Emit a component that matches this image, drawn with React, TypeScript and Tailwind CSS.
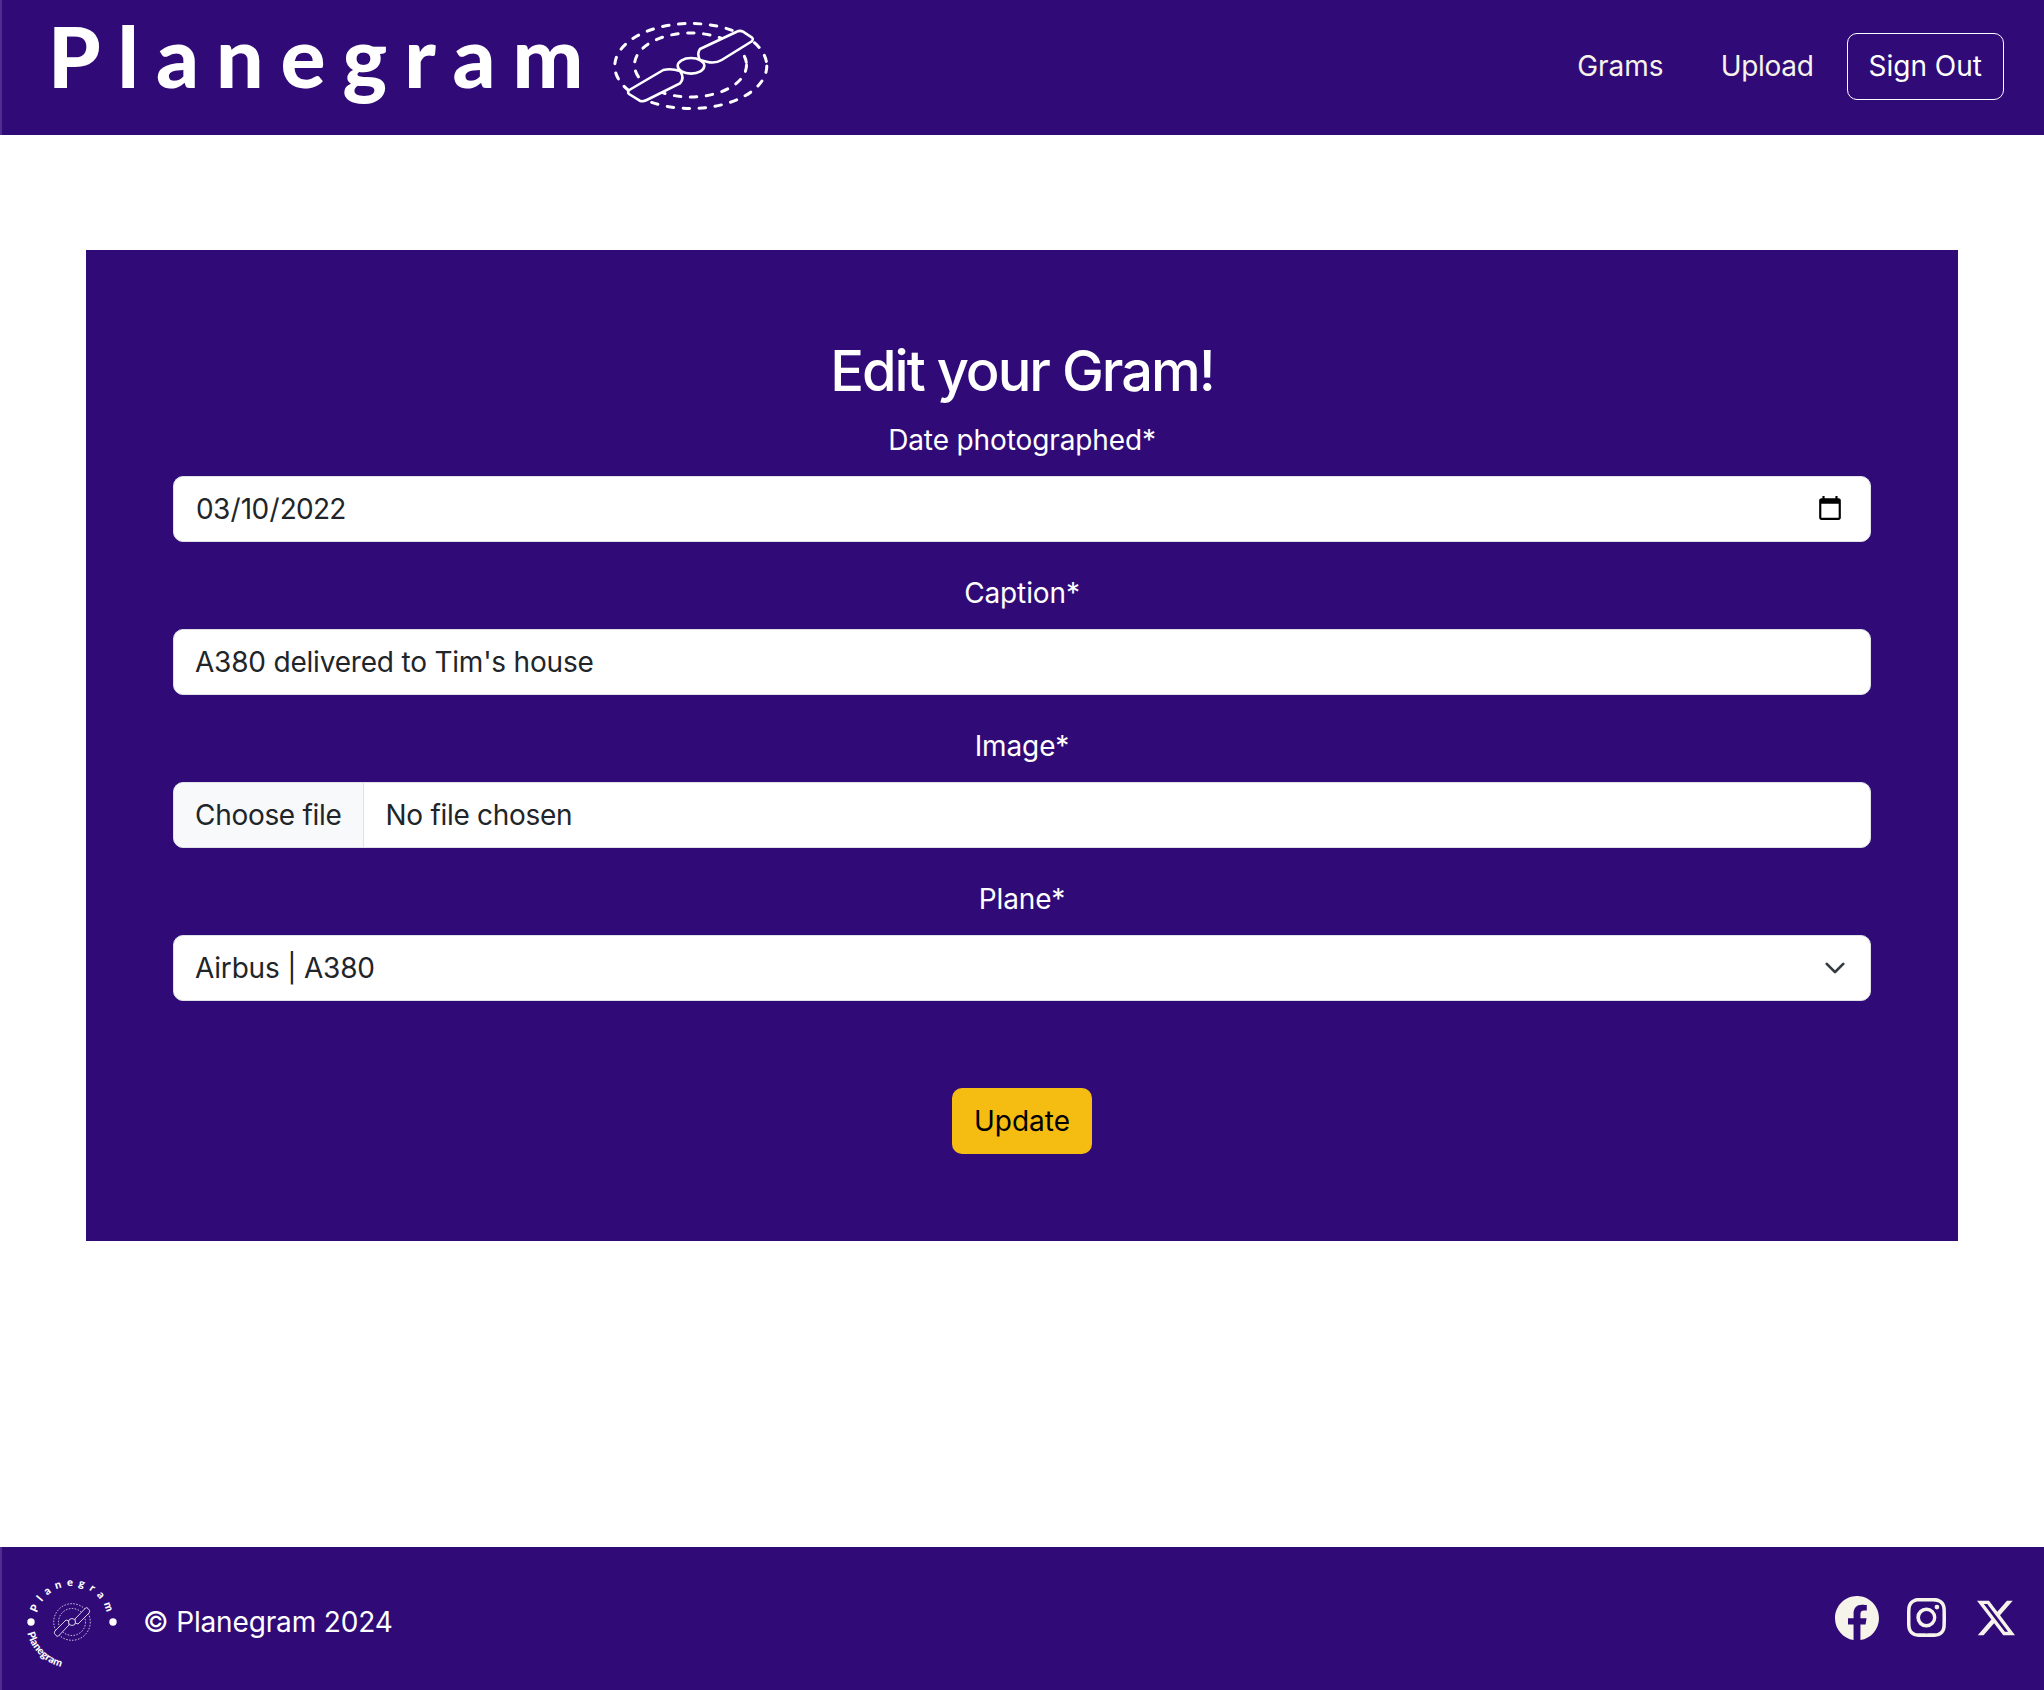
import React from 'react';
import { BsFacebook, BsInstagram, BsTwitterX } from 'react-icons/bs';

const inter = { fontFamily: 'Inter, "Liberation Sans", sans-serif' };

const PlaneIcon: React.FC = () => (
    <svg viewBox="0 0 157 91" className="w-[157px] h-[91px] shrink-0 -mt-[4px]" fill="none" stroke="white">
        <ellipse cx="77.800" cy="46" rx="76" ry="42.500" strokeWidth="3" strokeDasharray="6.500 9.500" strokeLinecap="round" />
        <ellipse cx="77.500" cy="45" rx="56" ry="32" strokeWidth="3" strokeDasharray="6.500 9.500" strokeLinecap="round" />
        <path
            d="M87 40 Q83.500 34 87 29 L123.700 11.700 Q127 10 130 11.700 L138.700 17.300 Q141 19 138.500 21.500 L108.700 40 Q102 44 93.700 41.700 Z"
            fill="#300b78"
            strokeWidth="2.600"
            strokeLinejoin="round"
        />
        <path
            d="M67 51 Q58 48 50.300 50 L16.300 70 Q14 72 16 74 L26.700 80.700 Q30 82 33.700 80 L67 63.300 Q72 58 67 51 Z"
            fill="#300b78"
            strokeWidth="2.600"
            strokeLinejoin="round"
        />
        <ellipse cx="78" cy="45.800" rx="13.300" ry="7.800" fill="#300b78" strokeWidth="2.600" />
    </svg>
);

const FooterLogo: React.FC = () => (
    <svg viewBox="0 0 96 96" className="w-[96px] h-[96px] shrink-0 overflow-visible" fill="white">
        <defs>
            <path id="arcTop" d="M12 48 A36 36 0 0 1 84 48" />
            <path id="arcBottom" d="M2 48 A46 46 0 0 0 94 48" />
        </defs>
        <text style={{ fontFamily: 'Lato, sans-serif', fontWeight: 900, fontSize: 11, letterSpacing: 5.2 }}>
            <textPath href="#arcTop" startOffset="9">Planegram</textPath>
        </text>
        <text style={{ fontFamily: 'Lato, sans-serif', fontWeight: 900, fontSize: 10.5 }}>
            <textPath href="#arcBottom" startOffset="11">Planegram</textPath>
        </text>
        <circle cx="7" cy="48" r="3.700" />
        <circle cx="89" cy="48" r="3.700" />
        <g fill="none" stroke="white" strokeWidth="0.800">
            <circle cx="48" cy="48" r="18.300" strokeDasharray="1.500 1.500" />
            <circle cx="48" cy="48" r="13.500" strokeDasharray="1.500 1.500" />
            <path d="M51 45 L61.500 34 Q63 33 64 34.500 L65.500 36.500 Q66 38 65 39 L54 50 L51 49 Z" fill="#300b78" />
            <path d="M45 51 L34.500 62 Q33 63 32 61.500 L30.500 59.500 Q30 58 31 57 L42 46 L45 47 Z" fill="#300b78" />
            <circle cx="48" cy="48" r="3.500" fill="#300b78" />
        </g>
    </svg>
);

const fieldClass =
    'block w-full h-[66px] rounded-[10px] border border-[#dee2e6] bg-white px-[21px] text-[28px] leading-[42px] tracking-[-0.2px] text-[#212529] outline-none';

const Field: React.FC<{ label: string; children: React.ReactNode }> = ({ label, children }) => (
    <div>
        <label className="block text-center text-[28px] leading-[42px] tracking-[-0.12px] text-white mb-[15px]">{label}</label>
        {children}
    </div>
);

export default function App() {
    return (
        <div className="min-h-screen flex flex-col bg-white" style={inter}>
            {/* Navbar */}
            <nav className="h-[135px] bg-[#300b78] border-l-2 border-[#4e2f90] flex items-center justify-between pl-[46px] pr-[40px]">
                <div className="flex items-center gap-[13px]">
                    <span
                        className="text-[84px] leading-none font-black tracking-[17px] text-white -mt-[24px]"
                        style={{ fontFamily: 'Lato, sans-serif' }}
                    >
                        Planegram
                    </span>
                    <PlaneIcon />
                </div>
                <div className="flex items-center text-[28px] leading-[42px]">
                    <a className="text-[#f6f3ea] mr-[57px] -mt-[4px]">Grams</a>
                    <a className="text-[#f6f3ea] tracking-[-0.3px] mr-[33px] -mt-[4px]">Upload</a>
                    <button className="h-[67px] px-[21px] rounded-[10px] border border-white text-white -mt-[3px]">Sign Out</button>
                </div>
            </nav>

            {/* Edit form */}
            <main className="flex-1 px-[86px] pt-[115px]">
                <section className="bg-[#300b78] h-[991px] px-[87px] pt-[84px]">
                    <h1 className="text-center text-[56px] leading-[74px] font-[550] tracking-[-2px] text-white mb-[11px]">
                        Edit your Gram!
                    </h1>
                    <div className="flex flex-col gap-[30px]">
                        <Field label="Date photographed*">
                            <input
                                type="date"
                                defaultValue="2022-03-10"
                                className={`${fieldClass} tracking-[-0.75px] [&::-webkit-calendar-picker-indicator]:mr-[3px]`}
                            />
                        </Field>
                        <Field label="Caption*">
                            <input type="text" defaultValue="A380 delivered to Tim's house" className={fieldClass} />
                        </Field>
                        <Field label="Image*">
                            <div className="flex h-[66px] rounded-[10px] border border-[#dee2e6] bg-white overflow-hidden text-[28px] leading-[42px] tracking-[-0.3px] text-[#212529]">
                                <span className="flex items-center px-[21px] bg-[#f8f9fa] border-r border-[#dee2e6]">Choose file</span>
                                <span className="flex items-center px-[22px]">No file chosen</span>
                            </div>
                        </Field>
                        <Field label="Plane*">
                            <div className="relative">
                                <select defaultValue="a380" className={`${fieldClass} appearance-none`}>
                                    <option value="a380">Airbus | A380</option>
                                </select>
                                <svg
                                    viewBox="0 0 16 16"
                                    className="absolute right-[25px] top-[22px] w-[22px] h-[22px] pointer-events-none"
                                    fill="none"
                                    stroke="#343a40"
                                    strokeWidth="2"
                                    strokeLinecap="round"
                                    strokeLinejoin="round"
                                >
                                    <path d="m2 5 6 6 6-6" />
                                </svg>
                            </div>
                        </Field>
                    </div>
                    <div className="flex justify-center mt-[87px]">
                        <button className="h-[66px] px-[22px] rounded-[10px] bg-[#f5bc12] text-[28px] leading-[42px] text-black">
                            Update
                        </button>
                    </div>
                </section>
            </main>

            {/* Footer */}
            <footer className="h-[143px] bg-[#300b78] border-l-2 border-[#4e2f90] flex items-center justify-between pl-[22px] pr-[29px]">
                <div className="flex items-center gap-[23px] mt-[6px]">
                    <FooterLogo />
                    <span className="text-[28px] leading-[42px] tracking-[-0.15px] text-white">© Planegram 2024</span>
                </div>
                <div className="flex items-center text-[#f6f3ea] -mt-[2px]">
                    <BsFacebook size={44} className="mr-[28px]" />
                    <BsInstagram size={39} className="mr-[31px]" />
                    <BsTwitterX size={38} />
                </div>
            </footer>
        </div>
    );
}
